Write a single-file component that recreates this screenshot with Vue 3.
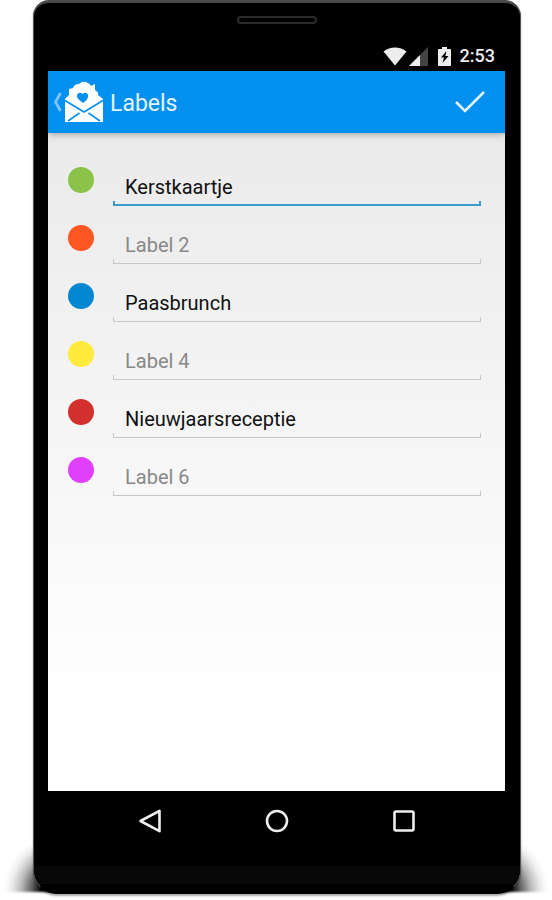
<script setup>
import { ref } from 'vue'

const labels = ref([
  { color: '#8bc34a', value: 'Kerstkaartje' },
  { color: '#ff5722', value: '' },
  { color: '#0288d1', value: 'Paasbrunch' },
  { color: '#ffeb3b', value: '' },
  { color: '#d32f2f', value: 'Nieuwjaarsreceptie' },
  { color: '#e040fb', value: '' },
])
const active = ref(0)
</script>

<template>
  <div class="stage">
    <div class="phone">
      <div class="speaker"></div>
      <div class="status">
        <svg width="24" height="19" viewBox="0 0 24 19" aria-hidden="true">
          <path d="M0.5 4.5C7 -1 17 -1 23.500 4.500L12 18.500Z" fill="#eee" />
        </svg>
        <svg width="19" height="19" viewBox="0 0 19 19" aria-hidden="true">
          <path d="M19 0V19H0Z" fill="#444" />
          <path d="M11 8V19H0Z" fill="#eee" />
        </svg>
        <svg class="battery" width="13" height="19" viewBox="0 0 13 19" aria-hidden="true">
          <path d="M4 0H9V2H12Q13 2 13 3V18Q13 19 12 19H1Q0 19 0 18V3Q0 2 1 2H4Z" fill="#eee" />
          <path d="M8.500 4L3 10.500H6L4.500 16L10.500 9H7.300Z" fill="#000" />
        </svg>
        <span class="clock">2:53</span>
      </div>

      <main class="screen">
        <header class="bar">
          <button class="up" type="button" aria-label="Back">
            <svg width="10" height="20" viewBox="0 0 10 20" aria-hidden="true">
              <path d="M8.500 1L3.500 10L8.500 19" fill="none" stroke="#7cc4f9" stroke-width="2.800" />
            </svg>
            <svg width="38" height="42" viewBox="0 0 38 42" aria-hidden="true">
              <path
                d="M0 18L4 14V8L8 7Q9 3 14 3Q18 -1 23 2Q25 3 26 5L30 3V9Q34 11 33 14L38 18V41H0Z"
                fill="#fff"
              />
              <path d="M0 19.500L19 31L38 19.500M3 40L14.500 32M35 40L23.500 32" fill="none" stroke="#0390ee" stroke-width="1.600" />
              <path d="M18 22C14 19 12 17.500 12 15C12 11.500 16 11 17.500 13C19.500 10.500 24 12 23 16C22.500 19 20 20 18 22Z" fill="#0390ee" />
            </svg>
          </button>
          <h1>Labels</h1>
          <button class="done" type="button" aria-label="Save">
            <svg width="32" height="24" viewBox="0 0 32 24" aria-hidden="true">
              <path d="M2 12L11 21L30 2" fill="none" stroke="#e3f3ff" stroke-width="2.600" />
            </svg>
          </button>
        </header>

        <form class="list" @submit.prevent>
          <div v-for="(label, i) in labels" :key="i" class="row">
            <span class="dot" :style="{ background: label.color }"></span>
            <input
              v-model="label.value"
              type="text"
              :class="{ active: active === i }"
              :placeholder="`Label ${i + 1}`"
              :aria-label="`Label ${i + 1}`"
              @focus="active = i"
            />
          </div>
        </form>
      </main>

      <nav class="keys">
        <button type="button" aria-label="Back">
          <svg width="24" height="24" viewBox="0 0 24 24" aria-hidden="true">
            <path d="M21.500 1.800V22.200L2.500 12Z" fill="none" stroke="#eee" stroke-width="2.600" stroke-linejoin="round" />
          </svg>
        </button>
        <button type="button" aria-label="Home">
          <svg width="24" height="24" viewBox="0 0 24 24" aria-hidden="true">
            <circle cx="12" cy="12" r="10" fill="none" stroke="#eee" stroke-width="2.600" />
          </svg>
        </button>
        <button type="button" aria-label="Recent apps">
          <svg width="24" height="24" viewBox="0 0 24 24" aria-hidden="true">
            <rect x="2.500" y="2.500" width="19" height="19" rx="1.500" fill="none" stroke="#eee" stroke-width="2.600" />
          </svg>
        </button>
      </nav>
      <div class="chin"></div>
    </div>
  </div>
</template>

<style>
body {
  background: #fff;
}
</style>

<style scoped>
* {
  box-sizing: border-box;
}
.stage {
  position: relative;
  isolation: isolate;
  overflow: hidden;
  min-height: 100vh;
  padding: 0 31px 6px 33px;
  display: flex;
  font-family: Roboto, "Liberation Sans", sans-serif;
}
.stage::before,
.stage::after {
  content: "";
  position: absolute;
  z-index: -1;
  bottom: 8px;
  width: 64px;
  height: 46px;
  filter: blur(1px);
}
.stage::before {
  left: 0;
  background: radial-gradient(ellipse 60px 60px at 100% 100%, #000 38%, #0009 55%, #0004 72%, #0001 88%, transparent);
}
.stage::after {
  right: 0;
  background: radial-gradient(ellipse 60px 60px at 0 100%, #000 38%, #0009 55%, #0004 72%, #0001 88%, transparent);
}
.phone {
  flex: 1;
  min-width: 0;
  display: flex;
  flex-direction: column;
  padding: 0 15px;
  overflow: hidden;
  background: #000;
  border: 1px solid #555;
  border-top: 3px solid #4a4a4a;
  border-bottom-color: #000;
  border-radius: 16px 16px 24px 24px;
  box-shadow: 0 2px 2px #0005;
}
.speaker {
  align-self: center;
  width: 80px;
  height: 8px;
  margin-top: 13px;
  border: 2px solid #2b2b2b;
  border-radius: 4px;
}
.status {
  display: flex;
  align-items: center;
  justify-content: flex-end;
  height: 47px;
  padding: 17px 10px 0 0;
  gap: 2px;
}
.battery {
  margin: 0 7px 0 8px;
}
.clock {
  color: #eee;
  font-size: 18px;
  font-weight: 500;
  line-height: 20px;
}
.screen {
  flex: 1;
  margin: 0 0 0 -1px;
  background: linear-gradient(#e8e8e8, #f0f0f0 30%, #fff 88%);
}
.bar {
  display: flex;
  align-items: center;
  height: 62px;
  padding: 0 19px 0 4px;
  background: #0390ee;
  box-shadow: 0 1px 7px #0005;
  clip-path: inset(0 0 -12px 0);
}
button {
  display: flex;
  align-items: center;
  padding: 0;
  border: 0;
  background: none;
  cursor: pointer;
}
.up {
  gap: 3px;
}
h1 {
  flex: 1;
  margin: 0;
  padding: 4px 0 0 7px;
  color: #e3f3ff;
  font-size: 23px;
  font-weight: 400;
  line-height: 28px;
}
.list {
  padding: 15px 24px 24px 20px;
}
.row {
  display: flex;
  align-items: center;
  gap: 19px;
  height: 58px;
  padding-top: 6px;
}
.dot {
  flex: none;
  width: 26px;
  height: 26px;
  border-radius: 50%;
}
input {
  --line: #c8c8c8;
  --thick: 1px;
  align-self: flex-end;
  flex: 1;
  min-width: 0;
  height: 40px;
  padding: 2px 12px 0;
  border: 0;
  outline: 0;
  background:
    linear-gradient(var(--line), var(--line)) bottom / 100% var(--thick) no-repeat,
    linear-gradient(var(--line), var(--line)) left bottom / var(--thick) 5px no-repeat,
    linear-gradient(var(--line), var(--line)) right bottom / var(--thick) 5px no-repeat;
  color: #111;
  font: 20px/24px Roboto, "Liberation Sans", sans-serif;
}
input.active {
  --line: #3a9cc9;
  --thick: 2px;
}
input::placeholder {
  color: #888;
  opacity: 1;
}
.keys {
  display: grid;
  grid-template-columns: repeat(3, 1fr);
  height: 75px;
  padding: 5px 37px 20px;
}
.keys button {
  justify-content: center;
}
.chin {
  height: 18px;
  margin: 0 -15px 9px;
  background: #080808;
}
</style>
